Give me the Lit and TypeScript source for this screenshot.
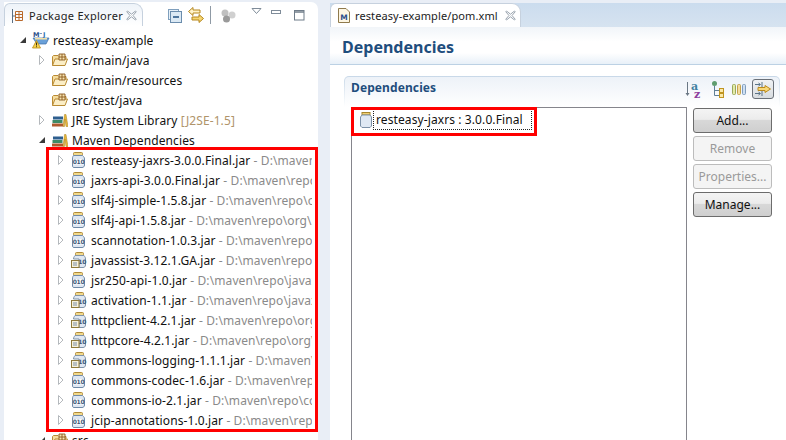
import { LitElement, html, css, svg } from "lit";
import { customElement } from "lit/decorators.js";

const arrowOpen = svg`<svg class="tw" width="8" height="10" viewBox="0 0 8 10"><path d="M1.5 .5 L6 5 L1.5 9.5Z" fill="#fff" stroke="#b4b8bc"/></svg>`;
const arrowDown = svg`<svg class="tw" width="8" height="10" viewBox="0 0 8 10"><path d="M7 2 V8 H1Z" fill="#3a3a3a"/></svg>`;
const noArrow = html`<span class="tw"></span>`;

const jar = svg`<svg class="ic" width="16" height="16" viewBox="0 0 16 16">
<rect x="2.5" y="0.5" width="9" height="3" rx="1" fill="#f2d98a" stroke="#b08a3a"/>
<path d="M2.5 3.5 H11.5 C13 5 13.5 5.5 13.5 7 V13 C13.5 14.5 12.5 15.5 11 15.5 H3 C1.5 15.5 1.5 14.5 1.5 13 V7 C1.5 5.5 1.5 5 2.5 3.5Z" fill="#dfe7f2" stroke="#6f8aa8"/>
<rect x="2.5" y="7" width="10" height="5.5" fill="#fff"/>
<text x="7.5" y="12" text-anchor="middle" font-size="6" font-weight="700" font-family="DejaVu Sans" fill="#3c5a7a" letter-spacing="-.4">010</text></svg>`;

const refJar = svg`<svg class="ic" width="16" height="16" viewBox="0 0 16 16">
<rect x="4.5" y="0.5" width="8" height="3" rx="1" fill="#f2d98a" stroke="#b08a3a"/>
<path d="M4 3.5 H13 C14 5 14.5 5.5 14.5 7 V13 C14.5 14.5 13.5 15.5 12 15.5 H8 V7 H2.5 C2.5 5.5 3 5 4 3.5Z" fill="#dfe7f2" stroke="#7f93a8"/>
<text x="11.2" y="12" text-anchor="middle" font-size="6" font-weight="700" font-family="DejaVu Sans" fill="#3c5a7a" letter-spacing="-.3">10</text>
<rect x="0.5" y="8.5" width="7.5" height="7" fill="#f6f1dc" stroke="#8f7a3c"/>
<path d="M2 11 H6 M2 13 H6" stroke="#7a8ea6"/></svg>`;

const pkgFolder = svg`<svg class="ic" width="16" height="14" viewBox="0 0 16 14">
<path d="M.5 12.5 V3.5 L1.5 2.5 H6 L7 3.5 H14 V5.5" fill="#f5dc9e" stroke="#b98b34"/>
<path d="M.5 12.5 L3 6 H15.5 L13 12.5Z" fill="#fbeec6" stroke="#b98b34"/>
<path d="M7 1 V7 H13 V1Z M10 1 V7 M7 4 H13" fill="#f7e4b0" stroke="#8a5a20" stroke-width=".9"/></svg>`;

const lib = svg`<svg class="ic" width="16" height="14" viewBox="0 0 16 14">
<rect x="0" y="10.5" width="11" height="3" fill="#b05a2e"/>
<rect x="0.5" y="7" width="10" height="3" fill="#3f8a66"/>
<rect x="1" y="3.5" width="10" height="3" fill="#2f5f8f"/>
<path d="M11 13.5 L12.5 1.5 H14 L16 13.5 H14 L13 6 L12.5 13.5Z" fill="#e8b93c" stroke="#a8801e" stroke-width=".5"/></svg>`;

const project = svg`<svg class="ic pj" width="18" height="18" viewBox="0 0 18 18">
<text x="1" y="5.5" font-size="6.5" font-weight="700" font-family="DejaVu Sans" fill="#2c4f8a">M</text>
<text x="11" y="5.5" font-size="6.5" font-weight="700" font-family="DejaVu Sans" fill="#2c70b0">J</text>
<path d="M7.5 2.5 H10" stroke="#7a9cc4"/>
<path d="M1 7 H17 L14 13 H5Z" fill="#6aa0d8" stroke="#3e6ea8" stroke-width=".7"/>
<path d="M3 7 H15 V8.5 H3Z" fill="#f4e2a6"/>
<path d="M4.5 9.5 L.5 17 H8.5Z" fill="#f6d24a" stroke="#b88a18" stroke-width=".8"/>
<path d="M4.5 11.5 V14.5 M4.5 15.3 V16.2" stroke="#40300a" stroke-width="1"/></svg>`;

const viewIcon = svg`<svg width="11" height="14" viewBox="0 0 11 14" class="vi">
<path d="M.5 0 V14" stroke="#5a6f84"/><path d="M.5 7 H3" stroke="#5a6f84"/>
<path d="M3.5 2.5 H10.5 M3.5 5.5 H10.5 M3.5 8.5 H10.5 M3.5 11.5 H10.5 M3.5 2.5 V11.5 M7 2.5 V11.5 M10.5 2.5 V11.5" stroke="#b9682a" fill="none"/></svg>`;
const closeX = svg`<svg width="11" height="11" viewBox="0 0 11 11"><path d="M1.5 1 L5.5 4.2 L9.5 1 L10.2 1.8 L7 5.5 L10.2 9.2 L9.5 10 L5.5 6.8 L1.5 10 L.8 9.2 L4 5.5 L.8 1.8Z" fill="#fff" stroke="#8d99a5" stroke-width=".9"/></svg>`;
const collapse = svg`<svg width="14" height="14" viewBox="0 0 14 14" class="tb1"><rect x=".5" y=".5" width="10" height="10" fill="#e6f0f8" stroke="#7f9fbd"/><rect x="2.5" y="2.5" width="11" height="11" fill="#dbe9f4" stroke="#6a8cac"/><path d="M5 8 H11" stroke="#1f4f80" stroke-width="1.6"/></svg>`;
const linkEd = svg`<svg width="16" height="16" viewBox="0 0 16 16" class="tb2"><path d="M.5 4.5 L5 .5 V3 H12 V6 H5 V8.5Z" fill="#fff3c8" stroke="#b5861d"/><path d="M15.5 11.5 L11 7.5 V10 H4 V13 H11 V15.5Z" fill="#f6d671" stroke="#b5861d"/></svg>`;
const spheres = svg`<svg width="15" height="14" viewBox="0 0 15 14" class="tb3"><circle cx="4" cy="4" r="3.5" fill="#c0c0c0"/><circle cx="11" cy="6" r="3.5" fill="#d0d0d0"/><circle cx="5.5" cy="10" r="3.5" fill="#9a9a9a"/></svg>`;
const menuTri = svg`<svg width="11" height="7" viewBox="0 0 11 7" class="tb4"><path d="M1 .5 H10 L5.5 5.5Z" fill="#fff" stroke="#7f8c99"/></svg>`;
const minBtn = svg`<svg width="11" height="5" viewBox="0 0 11 5" class="tb5"><rect x=".5" y=".5" width="9" height="3" fill="#fff" stroke="#7f8c99"/></svg>`;
const maxBtn = svg`<svg width="11" height="11" viewBox="0 0 11 11" class="tb6"><rect x=".5" y=".5" width="9.5" height="9.5" fill="#fff" stroke="#6f7c89"/><path d="M.5 2 H10" stroke="#6f7c89" stroke-width="1.4"/></svg>`;

const pomIcon = svg`<svg width="12" height="15" viewBox="0 0 12 15"><path d="M.5 .5 H8 L11.5 4 V14.5 H.5Z" fill="#fdf6e3" stroke="#8f7a4c"/><text x="6" y="11.5" text-anchor="middle" font-size="7.5" font-weight="700" font-family="DejaVu Sans" fill="#2c4f8a">M</text></svg>`;
const smallJar = svg`<svg width="12" height="16" viewBox="0 0 12 16"><rect x="2" y=".5" width="8" height="2.5" fill="#f0d070" stroke="#a8862c"/><path d="M2 3 H10 L11.5 5 V14 L10 15.5 H2 L.5 14 V5Z" fill="#dfe8f3" stroke="#7c91a8"/></svg>`;
const sortAz = svg`<svg width="17" height="17" viewBox="0 0 17 17"><path d="M2.5 1 V14" stroke="#6a7784"/><path d="M.5 12 L2.5 15 L4.5 12Z" fill="#6a7784"/><text x="6" y="9" font-size="11" font-weight="700" font-family="DejaVu Serif" fill="#3f7fa0">a</text><text x="9" y="16.5" font-size="11" font-weight="700" font-family="DejaVu Serif" fill="#8e3f9e">z</text></svg>`;
const hierarchy = svg`<svg width="13" height="17" viewBox="0 0 13 17"><circle cx="3.5" cy="2.5" r="2.5" fill="#5f9d6f"/><path d="M3.5 5 V14.5 H8 M3.5 9.5 H8" stroke="#5f7f96" fill="none"/><rect x="8.5" y="7.5" width="4" height="4" fill="#fbe9a8" stroke="#bf9420"/><rect x="8.5" y="12.5" width="4" height="4" fill="#fbe9a8" stroke="#bf9420"/></svg>`;
const columns = svg`<svg width="15" height="11" viewBox="0 0 15 11"><rect x=".5" y=".5" width="3" height="10" rx="1" fill="#e3eaa8" stroke="#9aa85a"/><rect x="5.5" y=".5" width="3" height="10" rx="1" fill="#f3dc9c" stroke="#c4a24c"/><rect x="10.5" y=".5" width="3" height="10" rx="1" fill="#cfe0f2" stroke="#7f9dbd"/></svg>`;
const filterOn = svg`<svg width="16" height="14" viewBox="0 0 16 14"><path d="M0 2.5 H5 M3.5 1 L5.5 2.5 L3.5 4 M7 0 V5 M0 11.5 H5 M3.5 10 L5.5 11.5 L3.5 13 M7 9 V14" stroke="#5b7487" fill="none"/><path d="M3 5.5 H10 V3.5 L15.5 7 L10 10.5 V8.5 H3Z" fill="#f8d878" stroke="#bb8a1c"/></svg>`;

interface Jar { n: string; p: string; ref?: boolean }
const jars: Jar[] = [
  { n: "resteasy-jaxrs-3.0.0.Final.jar", p: "D:\\maven\\repo\\org\\jboss" },
  { n: "jaxrs-api-3.0.0.Final.jar", p: "D:\\maven\\repo\\org\\jboss" },
  { n: "slf4j-simple-1.5.8.jar", p: "D:\\maven\\repo\\org\\slf4j" },
  { n: "slf4j-api-1.5.8.jar", p: "D:\\maven\\repo\\org\\slf4j" },
  { n: "scannotation-1.0.3.jar", p: "D:\\maven\\repo\\org\\scan" },
  { n: "javassist-3.12.1.GA.jar", p: "D:\\maven\\repo\\org\\javassist", ref: true },
  { n: "jsr250-api-1.0.jar", p: "D:\\maven\\repo\\javax\\annotation" },
  { n: "activation-1.1.jar", p: "D:\\maven\\repo\\javax\\activation", ref: true },
  { n: "httpclient-4.2.1.jar", p: "D:\\maven\\repo\\org\\apache", ref: true },
  { n: "httpcore-4.2.1.jar", p: "D:\\maven\\repo\\org\\apache", ref: true },
  { n: "commons-logging-1.1.1.jar", p: "D:\\maven\\repo\\commons", ref: true },
  { n: "commons-codec-1.6.jar", p: "D:\\maven\\repo\\commons" },
  { n: "commons-io-2.1.jar", p: "D:\\maven\\repo\\commons-io" },
  { n: "jcip-annotations-1.0.jar", p: "D:\\maven\\repo\\net\\jcip" },
];

@customElement("app-root")
export class AppRoot extends LitElement {
  static styles = css`
    :host { display: block; width: 786px; height: 440px; overflow: hidden; position: relative; background: #e9eef6;
      font-family: "Noto Sans", sans-serif; font-size: 12px; color: #111; }
    * { box-sizing: border-box; }
    .page { display: grid; grid-template-columns: 314px 456px; column-gap: 12px; padding: 2px 0 0 4px; height: 440px; }
    .left { background: #fff; border-radius: 0 7px 0 0; height: 438px; overflow: hidden; }
    .lhead { display: flex; height: 24px; align-items: flex-start; }
    .tab { height: 23px; margin-top: 1px; width: 139px; flex: none; display: flex; align-items: center; padding: 1px 0 0 7px; border: 1px solid #c6d1de; border-bottom: none;
      border-radius: 6px 9px 0 0; background: linear-gradient(#eef3f9, #fff); color: #222; white-space: nowrap; font-size: 11px; letter-spacing: .3px; }
    .tab .vi { margin-right: 6px; flex: none; }
    .tab .tt { width: 97px; }
    .tools { flex: 1; display: flex; align-items: center; height: 24px; padding-left: 25px; }
    .tools svg { flex: none; }
    .tb1 { margin-top: 4px; }
    .tb2 { margin: 2px 0 0 6px; }
    .sep { width: 1px; height: 18px; background: #8f9aa5; margin: 2px 0 0 6px; }
    .tb3 { margin: 3px 0 0 10px; }
    .tb4 { margin: -6px 0 0 15px; }
    .tb5 { margin: -4px 0 0 9px; }
    .tb6 { margin: 2px 0 0 12px; }
    .tree { padding-top: 4px; width: 308px; overflow: hidden; letter-spacing: .1px; }
    .row { height: 20px; display: flex; align-items: center; white-space: nowrap; }
    .l0 { padding-left: 15px; }
    .l1 { padding-left: 34px; }
    .l2 { padding-left: 53px; }
    .tw { flex: none; display: block; width: 8px; height: 10px; margin-right: 6px; }
    .ic { flex: none; margin-right: 4px; }
    .pj { margin: 0 3px 0 -1px; }
    .dim { color: #8a8a8a; }
    .qual { color: #b0946a; }
    .right { display: flex; flex-direction: column; height: 437px; margin-top: 1px; background: #fff; }
    .rhead { display: flex; height: 24px; flex: none; background: linear-gradient(#cbdcee, #d6e3f0); }
    .etab { width: 191px; height: 24px; background: #fff; border: 1px solid #c6d1de; border-bottom: none; border-radius: 6px 9px 0 0;
      display: flex; align-items: center; padding: 0 0 0 7px; color: #222; white-space: nowrap; font-size: 11px; letter-spacing: .1px; }
    .etab svg { flex: none; }
    .etab svg:first-child { margin-right: 5px; }
    .etab .tt { width: 150px; }
    .form { height: 38px; flex: none; background: linear-gradient(#f1f5f9, #fff 40%, #fff 70%, #e8f0f8); border-bottom: 1px solid #bcd1e4; display: flex; align-items: center; padding: 3px 0 0 12px;
      font-size: 16px; font-weight: 700; color: #1f4e7d; }
    .body { flex: 1; min-height: 0; padding: 11px 6px 0 14px; }
    .frame { background: linear-gradient(#c8d8e8, #fff); padding: 1px 1px 0; border-radius: 5px 5px 0 0; }
    .stitle { height: 30px; display: flex; align-items: center; padding: 0 5px 6px 6px; font-weight: 700; color: #1f4e7d; border-radius: 4px 4px 0 0; background: linear-gradient(#edf2f8, #fff); letter-spacing: .1px; }
    .stitle .name { margin-bottom: 4px; }
    .stitle .grow { flex: 1; }
    .stitle svg { display: block; }
    .s1 { margin-right: 9px; }
    .s2 { margin-right: 8px; }
    .s3 { margin-right: 5px; }
    .tgl { width: 22px; height: 20px; border: 1px solid #6a7078; border-radius: 3px; background: linear-gradient(#f0f2f4, #d8dce0); display: flex; align-items: center; justify-content: center; }
    .content { display: flex; gap: 6px; padding-left: 7px; height: 340px; }
    .table { width: 336px; border: 1px solid #85858c; border-bottom: none; height: 340px; padding: 1px 0 0 8px; }
    .item { display: flex; align-items: center; height: 21px; gap: 1px; }
    .sel { height: 21px; border: 1px dotted #222; padding: 0 8px 0 2px; display: flex; align-items: center; white-space: nowrap; letter-spacing: .1px; }
    .btns { width: 79px; display: flex; flex-direction: column; gap: 3px; padding-top: 1px; }
    button { height: 25px; width: 79px; padding: 0; font: inherit; font-size: 12px; color: #111; border: 1px solid #6c6c6c; border-radius: 3px;
      background: linear-gradient(#f4f4f4, #ececec 45%, #d8d8d8 50%, #cfcfcf); }
    button[disabled] { color: #9a9a9a; border-color: #bcbcbc; background: #f4f4f4; }
    .mark { position: absolute; border: 3px solid #f00; pointer-events: none; }
    .m1 { left: 46px; top: 147px; width: 272px; height: 285px; }
    .m2 { left: 351px; top: 107px; width: 186px; height: 29px; }
  `;

  render() {
    return html`<div class="page">
      <section class="left">
        <div class="lhead">
          <div class="tab">${viewIcon}<span class="tt">Package Explorer</span>${closeX}</div>
          <div class="tools">${collapse}${linkEd}<span class="sep"></span>${spheres}${menuTri}${minBtn}${maxBtn}</div>
        </div>
        <div class="tree">
          <div class="row l0">${arrowDown}${project}<span>resteasy-example</span></div>
          <div class="row l1">${arrowOpen}${pkgFolder}<span>src/main/java</span></div>
          <div class="row l1">${noArrow}${pkgFolder}<span>src/main/resources</span></div>
          <div class="row l1">${noArrow}${pkgFolder}<span>src/test/java</span></div>
          <div class="row l1">${arrowOpen}${lib}<span>JRE System Library <span class="qual">[J2SE-1.5]</span></span></div>
          <div class="row l1">${arrowDown}${lib}<span>Maven Dependencies</span></div>
          ${jars.map((j) => html`<div class="row l2">${arrowOpen}${j.ref ? refJar : jar}<span>${j.n}<span class="dim"> - ${j.p}</span></span></div>`)}
          <div class="row l1">${arrowDown}${pkgFolder}<span>src</span></div>
        </div>
      </section>
      <section class="right">
        <div class="rhead"><div class="etab">${pomIcon}<span class="tt">resteasy-example/pom.xml</span>${closeX}</div></div>
        <div class="form">Dependencies</div>
        <div class="body">
          <div class="frame"><div class="stitle"><span class="name">Dependencies</span><span class="grow"></span>
            <span class="s1">${sortAz}</span><span class="s2">${hierarchy}</span><span class="s3">${columns}</span><span class="tgl">${filterOn}</span></div></div>
          <div class="content">
            <div class="table"><div class="item">${smallJar}<span class="sel">resteasy-jaxrs : 3.0.0.Final</span></div></div>
            <div class="btns"><button>Add...</button><button disabled>Remove</button><button disabled>Properties...</button><button>Manage...</button></div>
          </div>
        </div>
      </section>
    </div>
    <div class="mark m1"></div><div class="mark m2"></div>`;
  }
}
